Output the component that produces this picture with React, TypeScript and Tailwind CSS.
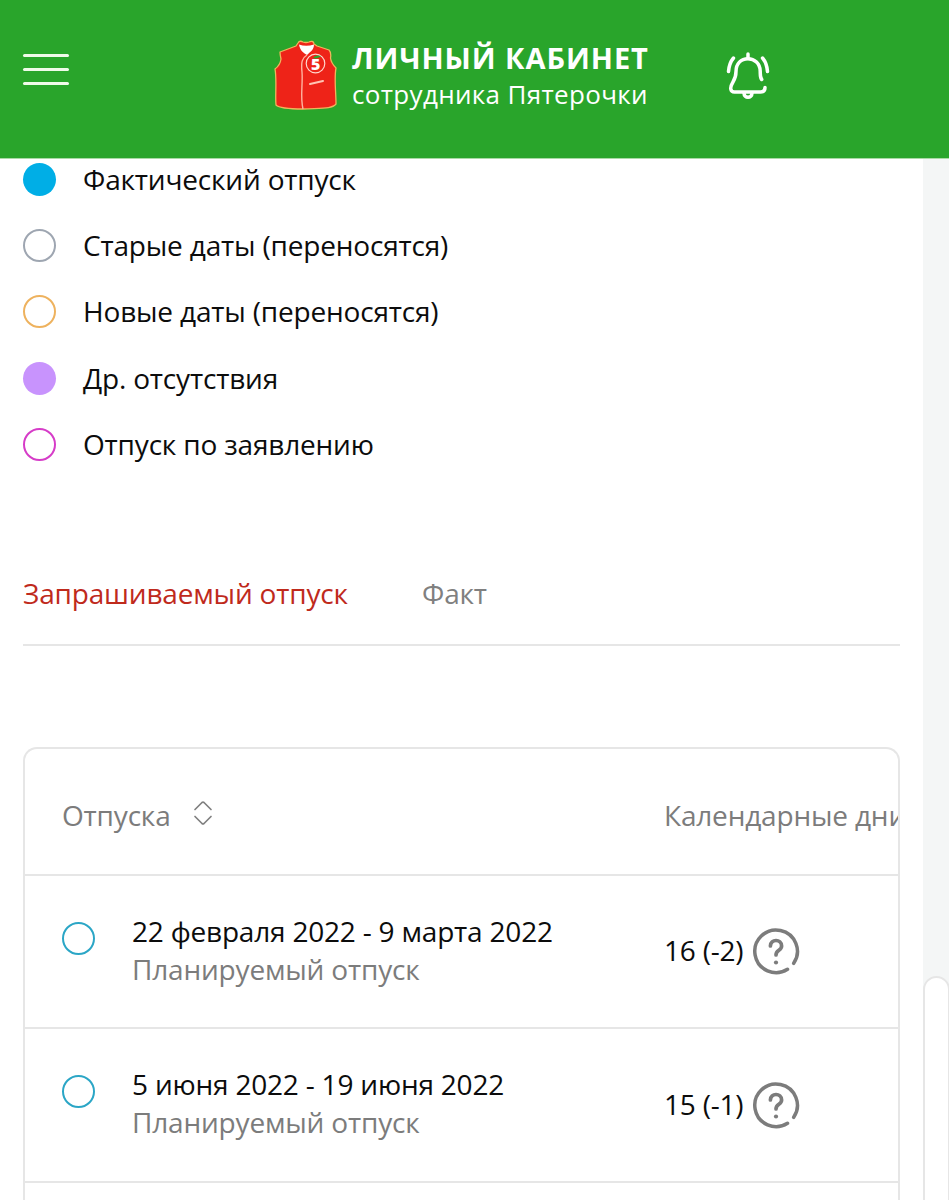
import { clsx } from 'clsx';

const legend = [
  { label: 'Фактический отпуск', dot: 'bg-[#00aee6]' },
  { label: 'Старые даты (переносятся)', dot: 'border-2 border-[#9ea6b1]' },
  { label: 'Новые даты (переносятся)', dot: 'border-2 border-[#eeb25e]' },
  { label: 'Др. отсутствия', dot: 'bg-[#c893fd]' },
  { label: 'Отпуск по заявлению', dot: 'border-2 border-[#d63cc8]' },
];

const vacations = [
  { id: 1, period: '22 февраля 2022 - 9 марта 2022', type: 'Планируемый отпуск', days: '16 (-2)' },
  { id: 2, period: '5 июня 2022 - 19 июня 2022', type: 'Планируемый отпуск', days: '15 (-1)' },
];

function VestLogo() {
  return (
    <svg className="w-[64px] h-[70px] shrink-0" viewBox="0 0 64 70" fill="none">
      <path
        d="M24 3C25 1 27 1 29 2Q32 3 35 2C37 1 40 1 40 4L43 6L55 10C57 12 57 15 56.500 18C57 22 59 25 62 28C60 38 62 52 62 64C58 69 48 68 29 69C20 69 6 69 2 65C1 56 3 40 1 29C5 26 6.500 23 7 19C6.500 17 6 14 6 12L22 6Z"
        fill="#ee2318"
        stroke="#f0b45c"
        strokeWidth="1.3"
        strokeLinejoin="round"
      />
      <path d="M25 4.500Q32 7 40 4.500C40 10 36 12 33 15C30 13 26 11 25 4.500Z" fill="#fff" />
      <path d="M33 15C28 18 27 22 28 32C29 45 26 56 29 69" stroke="#ffb3a0" strokeWidth="1.4" />
      <circle cx="41.500" cy="23.500" r="9.300" stroke="#ffd6cc" strokeWidth="1.2" />
      <text x="41.500" y="29.500" textAnchor="middle" fontFamily="Open Sans, sans-serif" fontSize="16" fontWeight="800" fill="#fff">
        5
      </text>
      <path d="M39 18C41 15 44 15 47 16C45 18 42 19 39 18Z" fill="#2ca52c" />
      <path d="M36 44L49 41" stroke="#ffc4b3" strokeWidth="2" strokeLinecap="round" />
    </svg>
  );
}

function BellIcon() {
  return (
    <svg
      className="w-[44px] h-[50px]"
      viewBox="0 0 44 50"
      fill="none"
      stroke="#fff"
      strokeWidth="3.5"
      strokeLinecap="round"
      strokeLinejoin="round"
    >
      <path d="M22 3V7.500" />
      <path d="M35.700 28.500C34 26.500 34.400 24 34.200 20C34 12.500 28.500 7.700 22 7.700C15 7.700 10 12.500 10 20.500C10 25.500 9.500 27 7 31C5.500 33.500 4.300 35.500 4.800 38C5.100 40 6.300 41 8.500 41H34.500C37.500 41 39 39.500 39 36.500" />
      <path d="M18 42C18 47.800 26 47.800 26 42" />
      <path d="M7.500 7C4.500 10.500 3 14.500 2.500 20.500M36.500 7C39.500 10.500 41 14.500 41.500 20.500" />
    </svg>
  );
}

function HelpIcon() {
  return (
    <svg
      className="w-[48px] h-[48px] -mt-px"
      viewBox="0 0 48 48"
      fill="none"
      stroke="#7c7c7c"
      strokeWidth="3.5"
      strokeLinecap="round"
    >
      <path d="M35.500 42.300A21.300 21.300 0 1 1 41.700 36.300" />
      <path d="M18.400 18.900C18.400 11.700 29.600 11.700 29.600 19C29.600 23.800 24 22.800 24 28" strokeWidth="3.700" />
      <circle cx="24" cy="35.500" r="2.100" fill="#7c7c7c" stroke="none" />
    </svg>
  );
}

function SortIcon() {
  return (
    <svg
      className="w-[20px] h-[26px]"
      viewBox="0 0 20 26"
      fill="none"
      stroke="#808080"
      strokeWidth="1.7"
      strokeLinecap="round"
      strokeLinejoin="round"
    >
      <path d="M2 9.500L9 2.500Q10 1.700 11 2.500L18 9.500" />
      <path d="M2 16.500L9 23.500Q10 24.300 11 23.500L18 16.500" />
    </svg>
  );
}

export default function App() {
  return (
    <div className="h-[1200px] w-[949px] overflow-hidden bg-white font-['Open_Sans','Noto_Sans',sans-serif] text-[28px] leading-[38px] tracking-[-0.18px] text-[#0c0c0c] whitespace-nowrap">
      {/* Header */}
      <header className="relative z-10 flex h-[158px] items-start bg-[#29a52b] text-white shadow-[0_1px_0_#a9dba5]">
        <button className="mt-[54px] ml-[23px] flex w-[46px] flex-col gap-[11px]" aria-label="Меню">
          <span className="h-[3px] w-full rounded-full bg-[#effbe9]" />
          <span className="h-[3px] w-full rounded-full bg-[#effbe9]" />
          <span className="h-[3px] w-full rounded-full bg-[#effbe9]" />
        </button>
        <div className="mt-[40px] ml-[205px] flex">
          <VestLogo />
          <div className="ml-[14px] w-[296px]">
            <div className="h-[37px] -mt-px text-[29px] font-bold tracking-[0.95px]">ЛИЧНЫЙ КАБИНЕТ</div>
            <div className="-mt-px text-[26px] tracking-[0.33px]">сотрудника Пятерочки</div>
          </div>
        </div>
        <button className="mt-[51px] ml-[78px]" aria-label="Уведомления">
          <BellIcon />
        </button>
      </header>

      <div className="flex h-[1042px]">
        <main className="w-[923px] pr-[23px] pl-[23px]">
          {/* Legend, partly scrolled under the header */}
          <ul className="-mt-[12px]">
            {legend.map((item) => (
              <li key={item.label} className="flex h-[66.4px] items-center">
                <span className={clsx('h-[33px] w-[33px] rounded-full', item.dot)} />
                <span className="-mt-px ml-[27px]">{item.label}</span>
              </li>
            ))}
          </ul>

          {/* Tabs */}
          <nav className="mt-[96px] flex h-[72px] w-[877px] items-start border-b-2 border-[#e6e6e6]">
            <button className="w-[399px] text-left text-[#bf2a1c]">Запрашиваемый отпуск</button>
            <button className="text-[#808080]">Факт</button>
          </nav>

          {/* Vacations table */}
          <section className="mt-[101px] h-[500px] w-[877px] overflow-hidden rounded-t-[14px] border-2 border-b-0 border-[#e6e6e6]">
            <div className="flex h-[127px] items-center border-b-2 border-[#e6e6e6] pt-[7px] text-[#7c7c7c]">
              <div className="flex w-[639px] shrink-0 items-center pl-[37px]">
                <span className="w-[131px]">Отпуска</span>
                <span className="-mt-[3px]">
                  <SortIcon />
                </span>
              </div>
              <span>Календарные дни</span>
            </div>
            {vacations.map((row) => (
              <div key={row.id} className="flex h-[153.500px] items-center border-b-2 border-[#e6e6e6]">
                <div className="-mt-[4px] flex w-[639px] shrink-0 items-start pl-[37px]">
                  <span className="mt-[10px] h-[33px] w-[33px] rounded-full border-2 border-[#2ba6c6]" />
                  <div className="ml-[37px]">
                    <div className="tracking-[-0.2px]">{row.period}</div>
                    <div className="text-[#7c7c7c]">{row.type}</div>
                  </div>
                </div>
                <span className="-mt-[3px] w-[88px] tracking-[-0.2px]">{row.days}</span>
                <HelpIcon />
              </div>
            ))}
          </section>
        </main>

        {/* Page background with the next panel on the right edge */}
        <aside className="w-[26px] overflow-hidden bg-[#f4f6f6] pt-[818px]">
          <div className="h-[300px] w-[27px] rounded-t-[14px] border-2 border-[#e6e6e6] bg-white" />
        </aside>
      </div>
    </div>
  );
}
